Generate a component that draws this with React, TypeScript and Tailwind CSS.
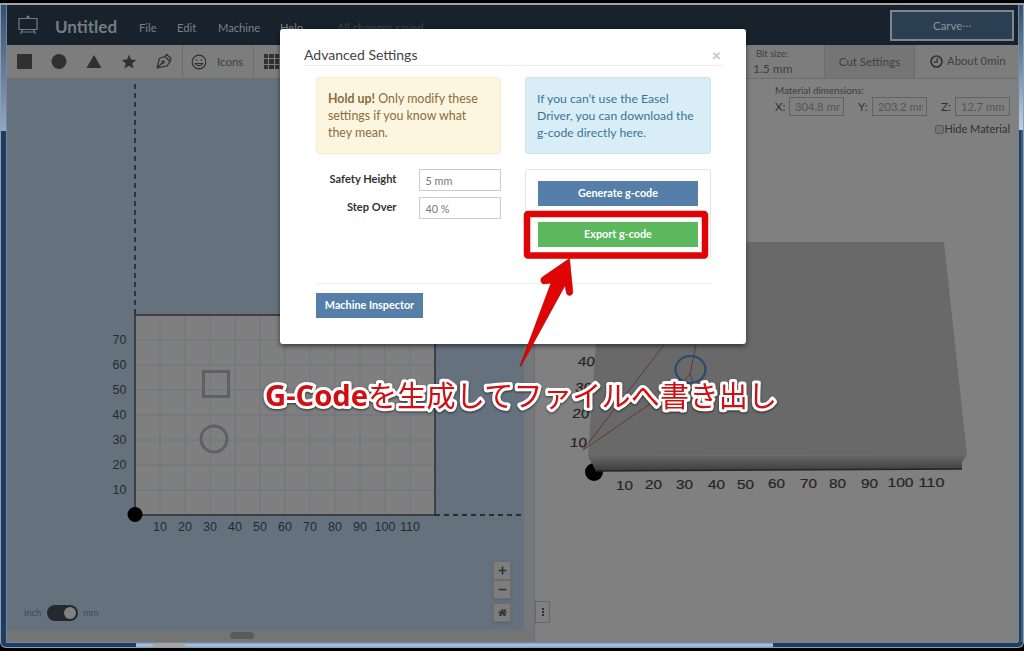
import type { ReactNode } from "react";
import { FaHome, FaMinus, FaPlus } from "react-icons/fa";

const X_TICKS = [10, 20, 30, 40, 50, 60, 70, 80, 90, 100, 110];
const Y_TICKS = [10, 20, 30, 40, 50, 60, 70];

// label centres along the front edge of the 3D block
const PREVIEW_X = [90, 119, 150, 182, 211, 242, 274, 303, 335, 366, 397];

function EaselLogo() {
  return (
    <svg viewBox="0 0 20 20" className="h-5 w-5 fill-none stroke-[#747a80]" strokeWidth="1.2">
      <path d="M1 3.5H19V14.5H1ZM4.500 14.5L2.5 19M15.500 14.5L17.5 19M3.5 17H16.500" />
      <path d="M8.500 3.500V1.500L10 .3L11.500 1.500V3.500Z" fill="#747a80" stroke="none" />
    </svg>
  );
}

function Header() {
  return (
    <header className="flex h-10 shrink-0 items-center bg-[#18222c] text-[11.2px] text-[#7b8187]">
      <div className="ml-[11px] mt-[-1px] w-[37px]">
        <EaselLogo />
      </div>
      <h1 className="w-[84px] pt-[3px] text-[17px] font-bold leading-none text-[#757c82]">Untitled</h1>
      <nav className="flex pt-[6px]">
        <span className="w-[38px]">File</span>
        <span className="w-[41px]">Edit</span>
        <span className="w-[62px]">Machine</span>
        <span className="w-[57px]">Help</span>
        <span className="text-[#39434c]">All changes saved</span>
      </nav>
      <button className="ml-auto mr-[4px] h-[31px] w-[124px] border-2 border-[#7c8791] bg-[#2b3f53] pt-px text-[11.5px] text-[#8b949d]">
        Carve<span className="relative -top-[3px]">…</span>
      </button>
    </header>
  );
}

function Toolbar() {
  return (
    <div className="flex h-[34px] shrink-0 border-b border-[#6d6d6d] bg-[#7d7d7d] text-[11.5px] text-[#3f3f3f]">
      <svg viewBox="0 0 175 33" className="w-[175px] shrink-0 fill-[#303030]">
        <rect x="10" y="9" width="15" height="15" />
        <circle cx="52" cy="16.5" r="7.5" />
        <path d="M87 10L94.5 23H79.5Z" />
        <path d="M122 9.5L124 14.6L129.2 15L125.2 18.4L126.6 23.6L122 20.7L117.4 23.6L118.8 18.4L114.8 15L120 14.6Z" />
        <g fill="none" stroke="#303030" strokeWidth="1.2" strokeLinejoin="round">
          <path d="M150 23L152.4 13.3L158 11.5L163 16.5L160.3 20.8ZM158 11.5L159.7 9.5L164 13.5L163 16.5M150 23L155.5 17.7" />
          <circle cx="156.2" cy="17" r="1.2" />
        </g>
      </svg>
      <div className="flex w-[72px] items-center gap-[10px] border-x border-[#6d6d6d] pl-[8px]">
        <svg viewBox="0 0 16 16" className="h-4 w-4 fill-none stroke-[#303030]" strokeWidth="1.2">
          <circle cx="8" cy="8" r="6.8" />
          <path d="M4.4 9.5C6 12.4 10 12.4 11.6 9.5Z" />
          <circle cx="5.6" cy="6" r=".8" fill="#303030" stroke="none" />
          <circle cx="10.4" cy="6" r=".8" fill="#303030" stroke="none" />
        </svg>
        <span>Icons</span>
      </div>
      <div className="ml-[10px] mt-[9px] grid h-[15px] w-[15px] shrink-0 grid-cols-3 gap-px">
        {Array.from({ length: 9 }, (_, i) => (
          <i key={i} className="bg-[#303030]" />
        ))}
      </div>
      <div className="ml-auto w-[71px] pt-[3px]">
        <p className="ml-[3px] text-[9.5px] leading-[12px]">Bit size:</p>
        <p className="text-[12px] leading-[17px]">1.5 mm</p>
      </div>
      <div className="flex w-[91px] items-center justify-center border-x border-[#6b6b6b] bg-[#757575]">
        Cut Settings
      </div>
      <div className="flex w-[103px] items-center gap-1 pl-[15px] text-[11.3px]">
        <svg viewBox="0 0 14 14" className="h-[13px] w-[13px] fill-none stroke-[#303030]" strokeWidth="1.7">
          <circle cx="7" cy="7" r="5.9" />
          <path d="M7.7 3.2V7.6H4" strokeWidth="1.3" />
        </svg>
        About 0min
      </div>
    </div>
  );
}

function DesignCanvas() {
  return (
    <svg viewBox="7 79 517 551" className="block h-[551px] w-[517px] bg-[#65727e]">
      <rect x="135" y="315" width="300" height="200" fill="#7f7f7f" />
      <g stroke="#6f7480" strokeWidth="1">
        {X_TICKS.map((t) => (
          <path key={t} d={`M${135 + t * 2.5} 315V515`} />
        ))}
        {Y_TICKS.map((t) => (
          <path key={t} d={`M135 ${515 - t * 2.5}H435`} />
        ))}
      </g>
      <rect x="135" y="315" width="300" height="200" fill="none" stroke="#202327" strokeWidth="1.3" />
      <path d="M135 84V315M435 515H524" stroke="#171a1d" strokeWidth="1.4" strokeDasharray="5 4" fill="none" />
      <circle cx="135" cy="514.5" r="7.5" />
      <g fill="none" stroke="#606060" strokeWidth="3">
        <rect x="203.5" y="371.5" width="25" height="25" />
        <circle cx="214" cy="439" r="13" />
      </g>
      <g fontFamily="Liberation Sans" fontSize="12.5" fill="#252a2e" textAnchor="middle">
        {X_TICKS.map((t) => (
          <text key={t} x={135 + t * 2.5} y="530.5">{t}</text>
        ))}
        {Y_TICKS.map((t) => (
          <text key={t} x="119.5" y={519 - t * 2.5}>{t}</text>
        ))}
      </g>
    </svg>
  );
}

function UnitSwitch() {
  return (
    <div className="absolute bottom-[9px] left-[17px] flex items-center text-[9.5px] text-[#424a50]">
      <span className="w-[23px]">inch</span>
      <span className="flex h-4 w-[31px] items-center justify-end rounded-full bg-[#24292d] p-[2px]">
        <i className="h-3 w-3 rounded-full bg-[#828282]" />
      </span>
      <span className="ml-[5px]">mm</span>
    </div>
  );
}

function ZoomButton({ children }: { children: ReactNode }) {
  return (
    <button className="flex h-[19px] w-[18px] items-center justify-center border border-[#6d6d6d] bg-[#7d7d7d] text-[9px] text-[#303030] shadow-sm">
      {children}
    </button>
  );
}

function DesignPane() {
  return (
    <section className="w-[528px] shrink-0 border-r border-[#6e6e73] bg-[#76777b]">
      <div className="relative w-[517px]">
        <DesignCanvas />
        <UnitSwitch />
        <div className="absolute bottom-[8px] right-[13px] flex flex-col">
          <ZoomButton><FaPlus /></ZoomButton>
          <ZoomButton><FaMinus /></ZoomButton>
          <div className="mt-1"><ZoomButton><FaHome /></ZoomButton></div>
        </div>
      </div>
      <div className="h-[11px] bg-[#747474] pt-[2px]">
        <div className="ml-[223px] h-[7px] w-6 rounded-full bg-[#5b5b5b]" />
      </div>
    </section>
  );
}

function Dimension({ label, value }: { label: string; value: string }) {
  return (
    <label className="flex items-center text-[11.5px] text-[#303030]">
      <span className="w-[14px]">{label}</span>
      <span className="h-[19px] w-[55px] whitespace-nowrap border border-[#626262] pl-[5px] text-[11.2px] leading-[18px] text-[#555]">
        <span className="block w-[45px] overflow-hidden">{value}</span>
      </span>
    </label>
  );
}

function PreviewPane() {
  return (
    <section className="relative w-[483px] bg-[#808080]">
      <svg viewBox="535 79 483 562" className="block h-[562px] w-[483px]">
        <defs>
          <linearGradient id="front" x1="0" y1="0" x2="0" y2="1">
            <stop offset="0" stopColor="#696969" />
            <stop offset="1" stopColor="#3d3d3d" />
          </linearGradient>
        </defs>
        <circle cx="594" cy="472" r="9" />
        <path d="M603 242L944 242L967 455L588 456Z" fill="#696969" />
        <path d="M588 456L967 455L962 462V469L596 471Z" fill="url(#front)" />
        <path d="M595 471L962 469" stroke="#242424" strokeWidth="1.5" />
        <g fontFamily="Liberation Sans" fontSize="13" fill="#252525" stroke="#252525" strokeWidth=".2" textAnchor="middle">
          {PREVIEW_X.map((x, i) => (
            <text key={x} x={x + 534.5} y={489.5 - i * 0.25} textLength={i > 8 ? 26 : 17} lengthAdjust="spacingAndGlyphs">
              {X_TICKS[i]}
            </text>
          ))}
          <g transform="skewX(-6)">
            <text x="624.5" y="366" textLength="17" lengthAdjust="spacingAndGlyphs">40</text>
            <text x="624.5" y="392" textLength="17" lengthAdjust="spacingAndGlyphs">30</text>
            <text x="624.5" y="418.5" textLength="17" lengthAdjust="spacingAndGlyphs">20</text>
            <text x="625" y="447" textLength="17" lengthAdjust="spacingAndGlyphs">10</text>
          </g>
        </g>
        <g fill="none" stroke="#65353d" strokeWidth="1">
          <path d="M583 450L664 345M583 450L685 380L690 374L696 345M690 374L693 382" />
        </g>
        <ellipse cx="690.5" cy="369.500" rx="15" ry="13.500" fill="none" stroke="#284c70" strokeWidth="2.2" />
      </svg>
      <div className="absolute right-[8px] top-[5px] flex flex-col">
        <p className="text-[9.8px] leading-[13px] text-[#3c3c3c]">Material dimensions:</p>
        <div className="flex gap-[14px]">
          <Dimension label="X:" value="304.8 mm" />
          <Dimension label="Y:" value="203.2 mm" />
          <Dimension label="Z:" value="12.7 mm" />
        </div>
        <label className="mt-[5px] flex items-center justify-end text-[11px] text-[#303030]">
          <i className="h-[9px] w-[9px] rounded-[2px] border border-[#5a5a5a] bg-[#747474]" />
          Hide Material
        </label>
      </div>
      <button className="absolute bottom-[19px] left-0 flex h-[22px] w-[15px] flex-col items-center justify-center gap-px border border-[#686868]">
        <i className="h-[2px] w-[2px] bg-[#303030]" />
        <i className="h-[2px] w-[2px] bg-[#303030]" />
        <i className="h-[2px] w-[2px] bg-[#303030]" />
      </button>
    </section>
  );
}

function Setting({ label, value }: { label: string; value: string }) {
  return (
    <div className="flex h-[28px] items-start">
      <label className="w-[81px] pt-[2px] text-right text-[11.1px] font-bold text-[#333]">{label}</label>
      <span className="ml-[23px] h-[22px] w-[82px] border border-[#ccc] pl-[5px] text-[10.8px] leading-[21px] text-[#777]">
        {value}
      </span>
    </div>
  );
}

function SettingsDialog() {
  return (
    <div
      role="dialog"
      aria-label="Advanced Settings"
      className="absolute left-[280px] top-[29px] h-[315px] w-[466px] rounded-[3px] bg-white pl-6 pr-[23px] shadow-[0_2px_5px_rgba(0,0,0,0.55)]"
    >
      <div className="flex h-[37px] justify-between border-b border-[#ebebeb] pt-[16px] text-[#444]">
        <h2 className="text-[14px] leading-[20px]">Advanced Settings</h2>
        <button className="pr-[2px] text-[16px] font-bold leading-[14px] text-[#c4c4c4]">×</button>
      </div>
      <div className="mx-[12px] flex justify-between pt-[11px]">
        <div className="w-[185px]">
          <p className="h-[77px] whitespace-nowrap rounded-[3px] border border-[#faebcc] bg-[#fcf6e1] pl-[11px] pt-[12px] text-[12.4px] leading-[17px] text-[#8a6d3b]">
            <b>Hold up!</b> Only modify these
            <br />
            settings if you know what
            <br />
            they mean.
          </p>
          <div className="mt-[15px]">
            <Setting label="Safety Height" value="5 mm" />
            <Setting label="Step Over" value="40 %" />
          </div>
        </div>
        <div className="w-[186px]">
          <p className="h-[77px] whitespace-nowrap rounded-[3px] border border-[#c6e6f0] bg-[#d9edf7] pl-[11px] pt-[12px] text-[12.2px] leading-[17px] text-[#3b7596]">
            If you can’t use the Easel
            <br />
            Driver, you can download the
            <br />
            g-code directly here.
          </p>
          <div className="mt-[15px] flex h-[90px] flex-col gap-[16px] rounded-[3px] border border-[#e4e4e4] px-[12px] pt-[11px] text-[10.8px] font-bold text-white">
            <button className="h-[25px] bg-[#557fa8]">Generate g-code</button>
            <button className="h-[25px] bg-[#5cb85c]">Export g-code</button>
          </div>
        </div>
      </div>
      <div className="mx-[12px] mt-[24px] border-t border-[#efefef] pt-[7px]">
        <button className="h-[25px] w-[107px] bg-[#557fa8] pb-px text-[10.8px] font-bold text-white">Machine Inspector</button>
      </div>
    </div>
  );
}

function Annotation() {
  return (
    <svg viewBox="0 0 1024 651" className="pointer-events-none absolute inset-0 h-[651px] w-[1024px]">
      <rect x="527" y="214" width="178" height="41.5" rx="1" fill="none" stroke="#df0505" strokeWidth="6.5" strokeLinejoin="round" />
      <path
        d="M520 366L551 283L543.500 284C540.500 283 540 279 542.500 277L569.500 258.500L572.800 292C572.500 296 567.500 296.500 566.500 293L565 285.500L521 366Z"
        fill="#df0505"
        stroke="#a80000"
        strokeWidth=".6"
        strokeLinejoin="round"
      />
      <g
        fill="#cf1013"
        stroke="#fff"
        strokeWidth="6"
        strokeLinejoin="round"
        className="drop-shadow-[0_1px_1px_rgba(0,0,0,0.6)] [paint-order:stroke]"
      >
        <text
          x="265"
          y="406"
          fontFamily="Open Sans, sans-serif"
          fontWeight="700"
          fontSize="28"
          textLength="103"
          lengthAdjust="spacingAndGlyphs"
        >
          G-Code
        </text>
        <text x="368" y="407" fontFamily="Noto Sans CJK JP, sans-serif" fontWeight="400" fontSize="29" textLength="409">
          を生成してファイルへ書き出し
        </text>
      </g>
    </svg>
  );
}

export default function App() {
  return (
    <div className="relative flex h-[651px] w-[1024px] flex-col overflow-hidden bg-black pt-[3px] font-['Lato',sans-serif]">
      <div className="flex h-[645px] flex-col rounded-b-md border border-t-2 border-[#8c9fb4] border-t-[#a0a3a6] bg-[#203c5e]">
        <div className="flex flex-1">
          <div className="flex w-[6px] flex-col border-r border-[#7286a0]">
            <div className="h-[126px] bg-gradient-to-b from-[#35506f] to-[#93a9c3]" />
          </div>
          <div className="flex w-[1011px] flex-col">
            <Header />
            <Toolbar />
            <main className="flex flex-1">
              <DesignPane />
              <PreviewPane />
            </main>
          </div>
          <div className="flex w-[5px] flex-col border-l border-[#75879d]">
            <div className="h-[125px] bg-gradient-to-b from-[#35506f] to-[#c0d0e3]" />
            <div className="ml-[2px] flex-1 bg-[#405d82]" />
          </div>
        </div>
        <div className="mx-[5px] flex h-[5px] border-t border-[#7286a0]">
          <div className="w-[130px]" />
          <div className="flex-1 bg-gradient-to-b from-[#7e9aba] via-[#b4c8e2] to-[#8ba5c4] pl-[17px]">
            <div className="h-full w-8 bg-[#a8a59c]" />
          </div>
          <div className="w-[245px]" />
        </div>
      </div>
      <SettingsDialog />
      <Annotation />
    </div>
  );
}
